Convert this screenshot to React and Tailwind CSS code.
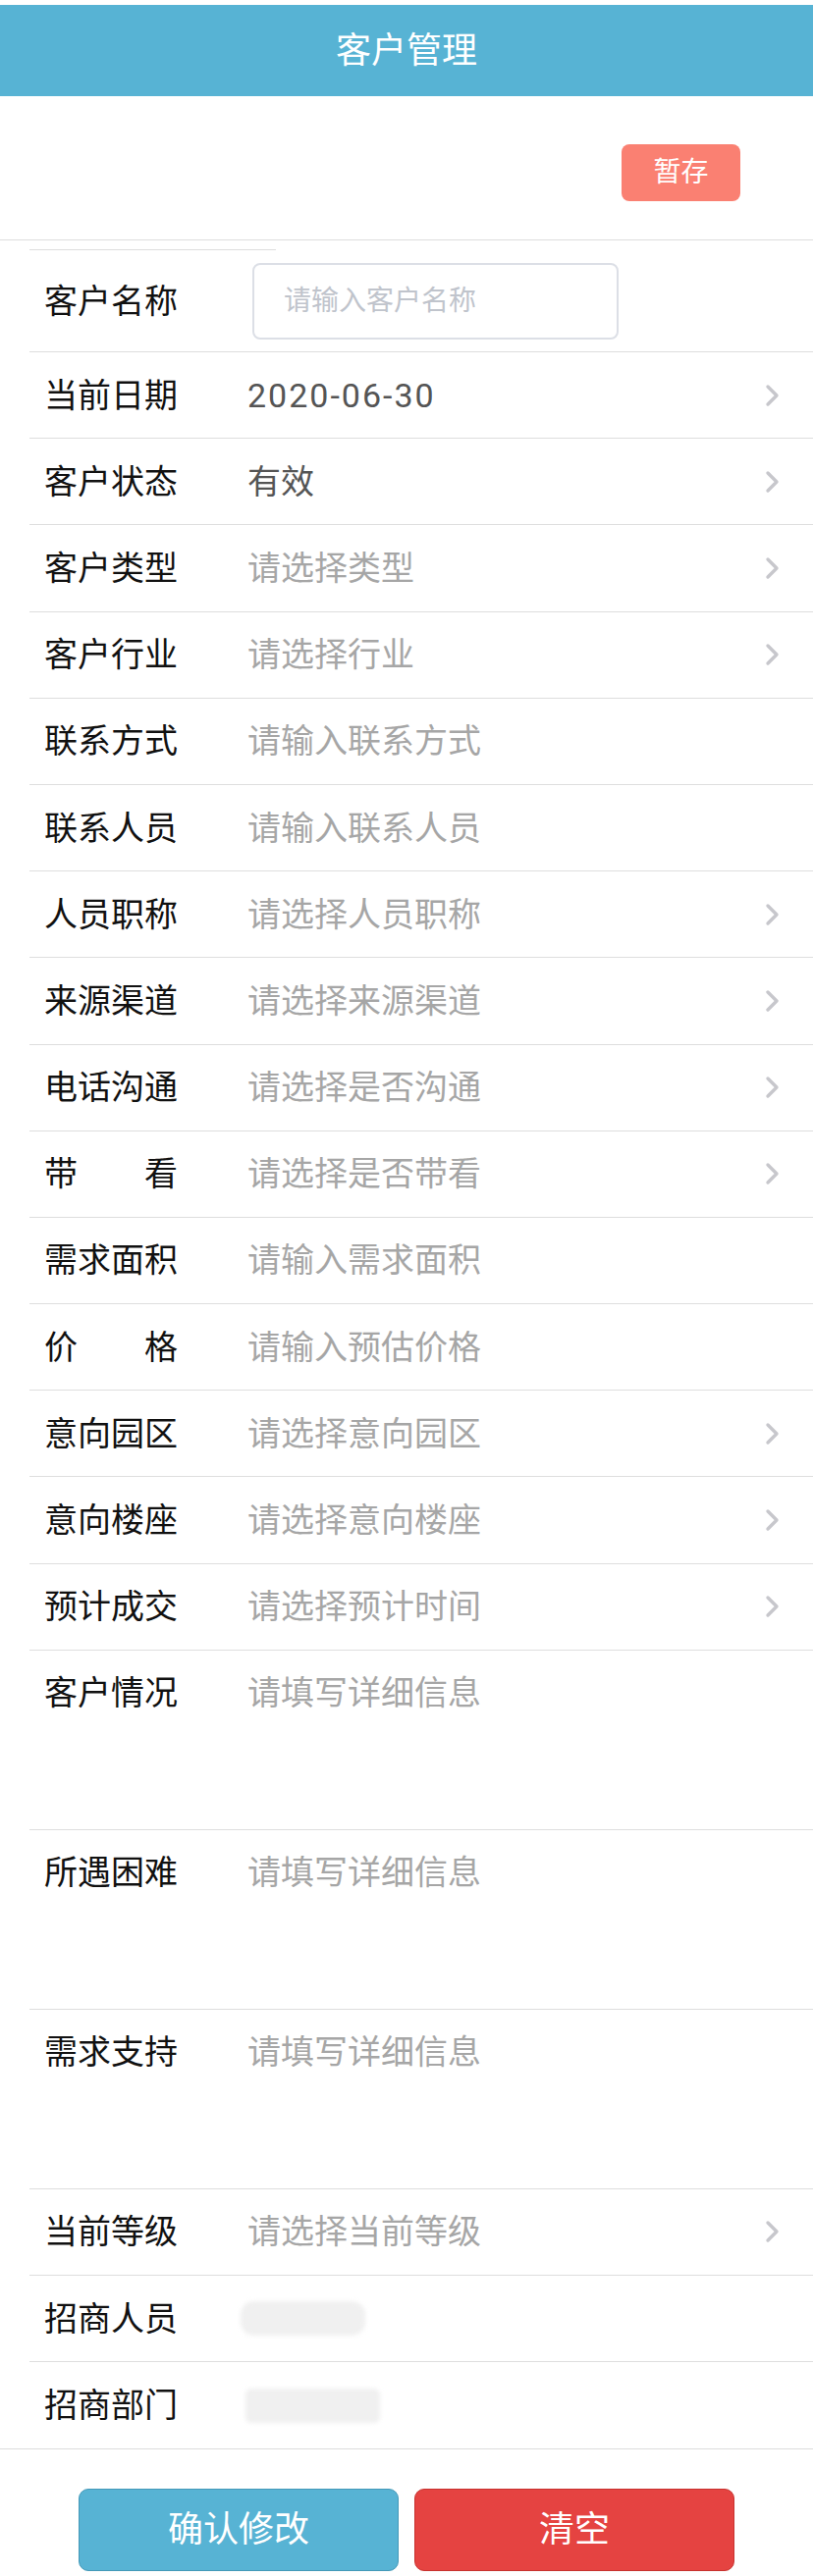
import React from 'react';

const FONT = { fontFamily: 'Roboto, "Noto Sans CJK SC", sans-serif' };

const Chevron = () => (
  <svg width="16" height="24" viewBox="0 0 16 24" className="shrink-0">
    <polyline points="3,3 12,12 3,21" fill="none" stroke="#c7c7cc" strokeWidth="3.4" strokeLinecap="round" strokeLinejoin="round" />
  </svg>
);

const Label = ({ text }) => {
  // two-char labels are spread across the label width
  if (text.length === 2) {
    return (
      <div className="w-[207px] shrink-0">
        <div className="w-[136px] flex justify-between">
          <span>{text[0]}</span>
          <span>{text[1]}</span>
        </div>
      </div>
    );
  }
  return <div className="w-[207px] shrink-0">{text}</div>;
};

const rows = [
  { label: '当前日期', value: '2020-06-30', filled: true, date: true, arrow: true },
  { label: '客户状态', value: '有效', filled: true, arrow: true },
  { label: '客户类型', value: '请选择类型', arrow: true },
  { label: '客户行业', value: '请选择行业', arrow: true },
  { label: '联系方式', value: '请输入联系方式' },
  { label: '联系人员', value: '请输入联系人员' },
  { label: '人员职称', value: '请选择人员职称', arrow: true },
  { label: '来源渠道', value: '请选择来源渠道', arrow: true },
  { label: '电话沟通', value: '请选择是否沟通', arrow: true },
  { label: '带看', value: '请选择是否带看', arrow: true },
  { label: '需求面积', value: '请输入需求面积' },
  { label: '价格', value: '请输入预估价格' },
  { label: '意向园区', value: '请选择意向园区', arrow: true },
  { label: '意向楼座', value: '请选择意向楼座', arrow: true },
  { label: '预计成交', value: '请选择预计时间', arrow: true },
];

const areas = ['客户情况', '所遇困难', '需求支持'];

const Row = ({ label, value, filled, date, arrow }) => (
  <div className="h-[88.2px] border-b border-[#dedede] flex items-center pl-[15px] pr-[33px] text-[34px] leading-none">
    <Label text={label} />
    <div
      className={`flex-1 ${filled ? 'text-[#555555]' : 'text-[#a6a6a6]'} ${date ? 'tracking-[2px]' : ''}`}
    >
      {value}
    </div>
    {arrow && <Chevron />}
  </div>
);

export default function App() {
  return (
    <div className="w-[828px] h-[2625px] bg-white text-[#111111] overflow-hidden" style={FONT}>
      {/* header */}
      <div className="pt-[5px]">
        <div className="h-[93px] bg-[#57b3d4] flex items-center justify-center text-white text-[36px]">
          客户管理
        </div>
      </div>

      {/* save */}
      <div className="h-[147px] border-b border-[#dddddd] flex justify-end items-start pt-[49px] pr-[74px]">
        <button className="w-[121px] h-[58px] rounded-[8px] bg-[#fa8072] text-white text-[28px] flex items-center justify-center">
          暂存
        </button>
      </div>

      {/* form */}
      <div className="border-b border-[#dddddd]">
        <div className="ml-[30px]">
          <div className="w-[251px] h-px bg-[#dedede] mt-[9px]" />
          <div className="h-[104px] border-b border-[#dedede] flex items-center pl-[15px] text-[34px] leading-none">
            <Label text="客户名称" />
            <div className="ml-[5px] w-[373px] h-[78px] border-2 border-[#dcdfe6] rounded-[8px] flex items-center pl-[30px] text-[28px] text-[#c0c4cc]">
              请输入客户名称
            </div>
          </div>

          {rows.map((r) => (
            <Row key={r.label} {...r} />
          ))}

          {areas.map((a) => (
            <div key={a} className="h-[183px] border-b border-[#dedede] pl-[15px] text-[34px] leading-none">
              <div className="h-[86px] flex items-center">
                <Label text={a} />
                <div className="flex-1 text-[#a6a6a6]">请填写详细信息</div>
              </div>
            </div>
          ))}

          <Row label="当前等级" value="请选择当前等级" arrow />

          <div className="h-[88px] border-b border-[#dedede] flex items-center pl-[15px] text-[34px] leading-none">
            <Label text="招商人员" />
            <div className="-ml-[7px] w-[127px] h-[35px] rounded-[14px] bg-[#f0f0f0] blur-[2px]" />
          </div>
          <div className="h-[88px] flex items-center pl-[15px] text-[34px] leading-none">
            <Label text="招商部门" />
            <div className="-ml-[2px] w-[137px] h-[35px] rounded-[6px] bg-[#f0f0f0] blur-[2px]" />
          </div>
        </div>
      </div>

      {/* actions */}
      <div className="flex justify-center gap-[16px] pt-[40px]">
        <button className="w-[326px] h-[84px] rounded-[10px] bg-[#57b3d4] border border-[#4599b8] text-white text-[36px] flex items-center justify-center">
          确认修改
        </button>
        <button className="w-[326px] h-[84px] rounded-[10px] bg-[#e54341] border border-[#c8322f] text-white text-[36px] flex items-center justify-center">
          清空
        </button>
      </div>
    </div>
  );
}
